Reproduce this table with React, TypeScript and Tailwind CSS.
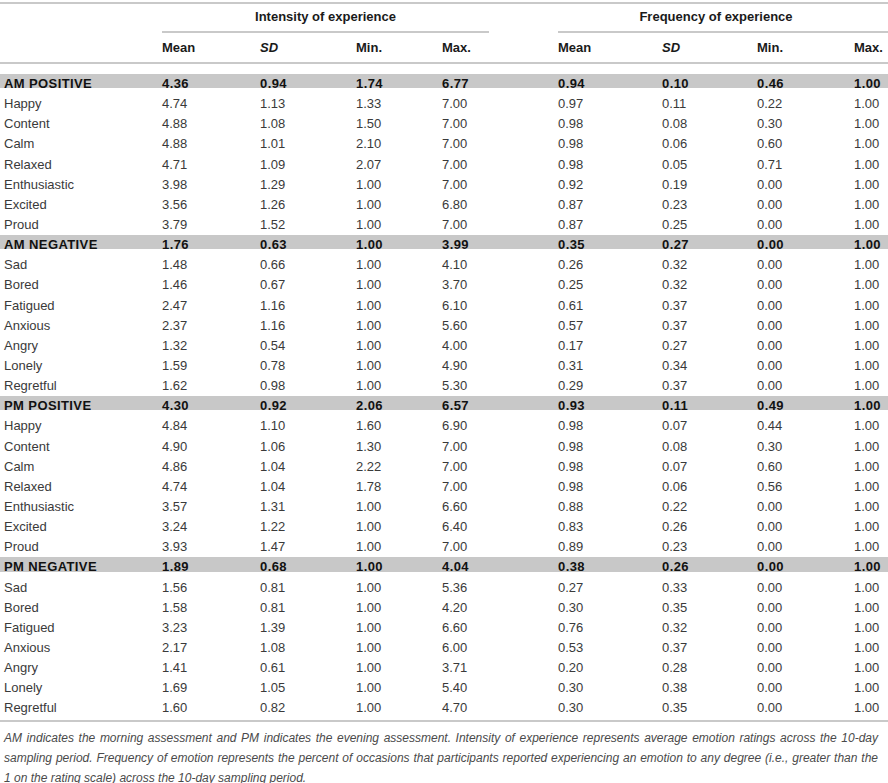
import React from 'react'

type Row = [string, ...string[]]

const rows: Row[] = [
  ['AM POSITIVE', '4.36', '0.94', '1.74', '6.77', '0.94', '0.10', '0.46', '1.00'],
  ['Happy', '4.74', '1.13', '1.33', '7.00', '0.97', '0.11', '0.22', '1.00'],
  ['Content', '4.88', '1.08', '1.50', '7.00', '0.98', '0.08', '0.30', '1.00'],
  ['Calm', '4.88', '1.01', '2.10', '7.00', '0.98', '0.06', '0.60', '1.00'],
  ['Relaxed', '4.71', '1.09', '2.07', '7.00', '0.98', '0.05', '0.71', '1.00'],
  ['Enthusiastic', '3.98', '1.29', '1.00', '7.00', '0.92', '0.19', '0.00', '1.00'],
  ['Excited', '3.56', '1.26', '1.00', '6.80', '0.87', '0.23', '0.00', '1.00'],
  ['Proud', '3.79', '1.52', '1.00', '7.00', '0.87', '0.25', '0.00', '1.00'],
  ['AM NEGATIVE', '1.76', '0.63', '1.00', '3.99', '0.35', '0.27', '0.00', '1.00'],
  ['Sad', '1.48', '0.66', '1.00', '4.10', '0.26', '0.32', '0.00', '1.00'],
  ['Bored', '1.46', '0.67', '1.00', '3.70', '0.25', '0.32', '0.00', '1.00'],
  ['Fatigued', '2.47', '1.16', '1.00', '6.10', '0.61', '0.37', '0.00', '1.00'],
  ['Anxious', '2.37', '1.16', '1.00', '5.60', '0.57', '0.37', '0.00', '1.00'],
  ['Angry', '1.32', '0.54', '1.00', '4.00', '0.17', '0.27', '0.00', '1.00'],
  ['Lonely', '1.59', '0.78', '1.00', '4.90', '0.31', '0.34', '0.00', '1.00'],
  ['Regretful', '1.62', '0.98', '1.00', '5.30', '0.29', '0.37', '0.00', '1.00'],
  ['PM POSITIVE', '4.30', '0.92', '2.06', '6.57', '0.93', '0.11', '0.49', '1.00'],
  ['Happy', '4.84', '1.10', '1.60', '6.90', '0.98', '0.07', '0.44', '1.00'],
  ['Content', '4.90', '1.06', '1.30', '7.00', '0.98', '0.08', '0.30', '1.00'],
  ['Calm', '4.86', '1.04', '2.22', '7.00', '0.98', '0.07', '0.60', '1.00'],
  ['Relaxed', '4.74', '1.04', '1.78', '7.00', '0.98', '0.06', '0.56', '1.00'],
  ['Enthusiastic', '3.57', '1.31', '1.00', '6.60', '0.88', '0.22', '0.00', '1.00'],
  ['Excited', '3.24', '1.22', '1.00', '6.40', '0.83', '0.26', '0.00', '1.00'],
  ['Proud', '3.93', '1.47', '1.00', '7.00', '0.89', '0.23', '0.00', '1.00'],
  ['PM NEGATIVE', '1.89', '0.68', '1.00', '4.04', '0.38', '0.26', '0.00', '1.00'],
  ['Sad', '1.56', '0.81', '1.00', '5.36', '0.27', '0.33', '0.00', '1.00'],
  ['Bored', '1.58', '0.81', '1.00', '4.20', '0.30', '0.35', '0.00', '1.00'],
  ['Fatigued', '3.23', '1.39', '1.00', '6.60', '0.76', '0.32', '0.00', '1.00'],
  ['Anxious', '2.17', '1.08', '1.00', '6.00', '0.53', '0.37', '0.00', '1.00'],
  ['Angry', '1.41', '0.61', '1.00', '3.71', '0.20', '0.28', '0.00', '1.00'],
  ['Lonely', '1.69', '1.05', '1.00', '5.40', '0.30', '0.38', '0.00', '1.00'],
  ['Regretful', '1.60', '0.82', '1.00', '4.70', '0.30', '0.35', '0.00', '1.00'],
]

// label | Mean SD Min Max | Mean SD Min Max
const cols = 'grid grid-cols-[158px_98px_96px_86px_116px_104px_95px_97px_1fr] pl-[4px]'

const headers = ['Mean', 'SD', 'Min.', 'Max.']

export default function App() {
  return (
    <div className="w-[888px] h-[783px] overflow-hidden bg-white text-[13px] text-[#3a3a3a] font-['Liberation_Sans',Arial,sans-serif]">
      <div className="mt-[2px] h-[2px] bg-[#c9c9c9]" />

      {/* group headers */}
      <div className="flex">
        <div className="w-[162px]" />
        <div className="w-[327px] h-[29px] pb-[2px] border-b-2 border-[#c9c9c9] flex items-center justify-center font-bold text-[#1a1a1a]">
          Intensity of experience
        </div>
        <div className="w-[69px]" />
        <div className="flex-1 h-[29px] pb-[2px] pr-[14px] border-b-2 border-[#c9c9c9] flex items-center justify-center font-bold text-[#1a1a1a]">
          Frequency of experience
        </div>
      </div>

      {/* column headers */}
      <div className={`${cols} h-[29px] items-center font-bold text-[#1a1a1a]`}>
        <div />
        {[...headers, ...headers].map((h, i) => (
          <div key={i} className={h === 'SD' ? 'italic' : ''}>
            {h}
          </div>
        ))}
      </div>
      <div className="h-[2px] bg-[#c9c9c9]" />

      <div className="pt-[7px]">
        {rows.map((r, i) => {
          const group = r[0] === r[0].toUpperCase()
          return (
            <div key={i} className="h-[20.15px] py-[3px]">
              <div
                className={`${cols} h-full items-center ${
                  group ? 'bg-[#c8c8c8] font-bold text-[#111] tracking-[0.4px]' : ''
                }`}
              >
                {r.map((c, j) => (
                  <div key={j} className="whitespace-nowrap">
                    {c}
                  </div>
                ))}
              </div>
            </div>
          )
        })}
      </div>

      <div className="mt-[4px] h-[2px] bg-[#c9c9c9]" />

      {/* footnote */}
      <div className="mt-[6px] pl-[4px] pr-[10px] italic text-[12px] leading-[20px] text-[#4a4a4a]">
        <div className="whitespace-nowrap text-justify [text-align-last:justify]">
          AM indicates the morning assessment and PM indicates the evening assessment. Intensity of experience represents average emotion ratings across the 10-day
        </div>
        <div className="whitespace-nowrap text-justify [text-align-last:justify]">
          sampling period. Frequency of emotion represents the percent of occasions that participants reported experiencing an emotion to any degree (i.e., greater than the
        </div>
        <div className="whitespace-nowrap">1 on the rating scale) across the 10-day sampling period.</div>
      </div>
    </div>
  )
}
